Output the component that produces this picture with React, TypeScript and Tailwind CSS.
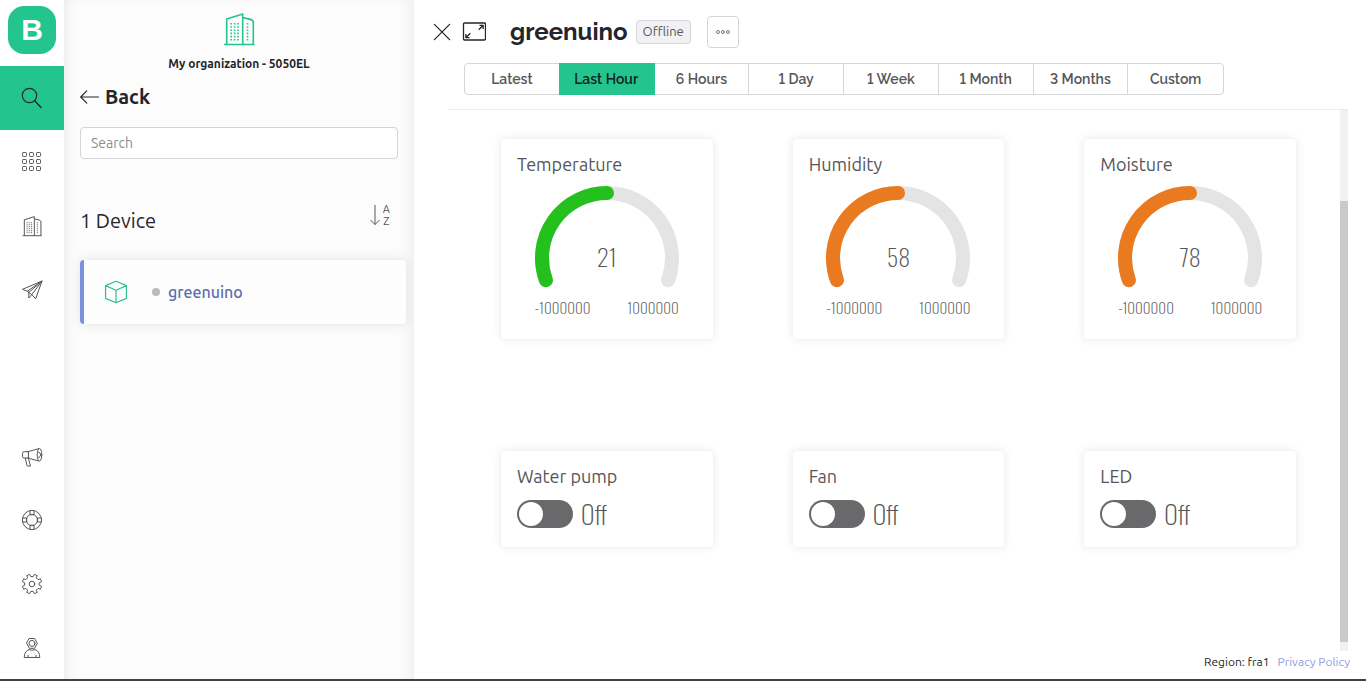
import React, { useState } from 'react';
import clsx from 'clsx';

interface Gauge {
  id: string;
  name: string;
  value: number;
  color: string;
}

interface IconProps {
  className?: string;
}

const gauges: Gauge[] = [
  { id: 'temperature', name: 'Temperature', value: 21, color: '#24c11e' },
  { id: 'humidity', name: 'Humidity', value: 58, color: '#ea7a20' },
  { id: 'moisture', name: 'Moisture', value: 78, color: '#ea7a20' },
];

const switches = [
  { id: 'pump', name: 'Water pump' },
  { id: 'fan', name: 'Fan' },
  { id: 'led', name: 'LED' },
];

const periods = ['Latest', 'Last Hour', '6 Hours', '1 Day', '1 Week', '1 Month', '3 Months', 'Custom'];

const MIN = -1000000;
const MAX = 1000000;

// Icons
const Icon: React.FC<IconProps & { children: React.ReactNode }> = ({ className, children }) => (
  <svg
    viewBox="0 0 20 20"
    className={clsx('overflow-visible', className ?? 'w-5 h-5')}
    fill="none"
    stroke="currentColor"
    strokeWidth="1"
    strokeLinejoin="round"
    strokeLinecap="round"
    aria-hidden="true"
  >
    {children}
  </svg>
);

const SearchIcon = () => (
  <Icon>
    <circle cx="7.5" cy="7.5" r="7.2" strokeWidth="1.2" />
    <path d="M12.8 12.8 19 19.5" strokeWidth="1.4" />
  </Icon>
);

const GridIcon = () => (
  <Icon>
    {[0.5, 7.5, 14.5].map(y =>
      [0.5, 7.5, 14.5].map(x => <rect key={`${x}-${y}`} x={x} y={y} width="4" height="4" rx="0.8" />)
    )}
  </Icon>
);

const BuildingIcon: React.FC<IconProps & { strokeWidth?: number }> = ({ className, strokeWidth = 1.6 }) => (
  <svg
    viewBox="0 0 32 34"
    className={className}
    fill="none"
    stroke="currentColor"
    strokeWidth={strokeWidth}
    strokeLinejoin="round"
    aria-hidden="true"
  >
    <path d="M1 32.5h30.5M3.7 32.5V7l16-5v30.5M19.7 5.5l7.6 1.9q3 .8 3 3v22.1" />
    <g strokeDasharray="1.6 1.6">
      <path d="M8.2 11v17.5M11.6 11v17.5M15 11v17.5M24.5 11v17.5" />
    </g>
  </svg>
);

const PlaneIcon = () => (
  <Icon>
    <path d="M20 1 .5 9.3l4.8 1.9L20 1l-6.3 17.8-3.9-4.2L20 1 6.8 12.4V18l3-3.4M6.8 12.4l-1.5-1.2M9.8 14.6l-3-2.2" />
  </Icon>
);

const MegaphoneIcon = () => (
  <Icon>
    <path d="M6 5.7H2.2Q.5 5.7.5 7.5v2.8q0 1.7 1.7 1.7H6zM6 5.7l10.6-3M6 12l10.6 3" />
    <ellipse cx="17.5" cy="8.8" rx="2.3" ry="6.3" />
    <path d="M16.6 6.1q2 .4 2 2.7t-2 2.7M3.3 12.3l1.6 7q.2.8 1 .8h2.6l-2.1-7.8" />
  </Icon>
);

const LifebuoyIcon = () => (
  <Icon>
    <circle cx="10" cy="10" r="9.6" />
    <circle cx="10" cy="10" r="5.6" />
    <path d="M8 .6v4.1h4V.6M8 19.4v-4.1h4v4.1M.6 8h4.1v4H.6M19.4 8h-4.1v4h4.1" />
  </Icon>
);

// Eight teeth, with a notch facing each of the four sides
const gearPath = () => {
  const points: string[] = [];
  for (let i = 0; i < 8; i++) {
    const middle = i * 45 + 22.5;
    [[-13, 7.5], [-9, 9.9], [9, 9.9], [13, 7.5]].forEach(([offset, r]) => {
      const a = ((middle + offset) * Math.PI) / 180;
      points.push(`${(10 + r * Math.cos(a)).toFixed(2)} ${(10 + r * Math.sin(a)).toFixed(2)}`);
    });
  }
  return `M${points.join('L')}Z`;
};

const GearIcon = () => (
  <Icon>
    <path d={gearPath()} />
    <circle cx="10" cy="10" r="2.8" />
  </Icon>
);

const UserIcon = () => (
  <Icon>
    <path d="M7.4.5h5.2l2.7 4.8-2.7 5H7.4l-2.7-5z" />
    <circle cx="10" cy="5.4" r="3" />
    <path d="M7 11.6q-4.6 1.2-4.8 7.9h15.6q-.2-6.7-4.8-7.9-3 1.6-6 0M6 19.2v-1.8M14 19.2v-1.8" />
  </Icon>
);

const BackIcon = () => (
  <Icon className="w-5 h-5">
    <path d="M18.5 10H.7M6.8 3.8.7 10l6.1 6.2" strokeWidth="1.1" />
  </Icon>
);

const CubeIcon = () => (
  <Icon className="w-6 h-6 text-[#2fbf8e]">
    <path d="m10 1 8.7 3.7v10.6L10 19l-8.7-3.7V4.7zM1.3 4.7 10 8.5l8.7-3.8M10 8.5V19" />
  </Icon>
);

const CloseIcon = () => (
  <Icon className="w-4 h-4">
    <path d="m.5.5 19 19M19.5.5l-19 19" strokeWidth="1.6" />
  </Icon>
);

const ExpandIcon = () => (
  <svg viewBox="0 0 24 20" className="w-6 h-5" fill="none" stroke="currentColor" strokeWidth="1.3" aria-hidden="true">
    <rect x="1.5" y="1" width="22" height="17" rx="1" />
    <path d="M17.5 3.3h3.6v3.6M20.9 3.5l-4.2 4.2M3.9 12v3.7h3.6M4.1 15.5l4.2-4.2" />
  </svg>
);

const topLinks = [
  { label: 'Search', icon: <SearchIcon />, active: true },
  { label: 'Templates', icon: <GridIcon />, active: false },
  { label: 'Organizations', icon: <BuildingIcon className="w-5 h-[22px]" />, active: false },
  { label: 'Messages', icon: <PlaneIcon />, active: false },
];

const bottomLinks = [
  { label: 'News', icon: <MegaphoneIcon /> },
  { label: 'Help', icon: <LifebuoyIcon /> },
  { label: 'Settings', icon: <GearIcon /> },
  { label: 'Profile', icon: <UserIcon /> },
];

const Sidebar: React.FC = () => (
  <nav className="w-16 shrink-0 flex flex-col bg-white text-[#55565a]">
    <a href="#home" className="h-[66px] px-2 pt-1.5">
      <span className="w-12 h-12 rounded-2xl bg-[#24c48e] text-white text-3xl font-bold font-['Liberation_Sans',sans-serif] flex items-center justify-center">
        B
      </span>
    </a>
    {topLinks.map(link => (
      <a
        key={link.label}
        href="#nav"
        aria-label={link.label}
        className={clsx('h-16 flex items-center justify-center', link.active && 'bg-[#24c48e] text-[#1b2b26]')}
      >
        {link.icon}
      </a>
    ))}
    <div className="mt-auto pb-px">
      {bottomLinks.map(link => (
        <a key={link.label} href="#nav" aria-label={link.label} className="h-16 flex items-center justify-center">
          {link.icon}
        </a>
      ))}
    </div>
  </nav>
);

const DevicePanel: React.FC = () => {
  const [query, setQuery] = useState('');

  return (
    <aside className="w-[350px] shrink-0 bg-[#fcfcfc] shadow-[inset_10px_0_12px_-8px_rgba(0,0,0,0.08),inset_-10px_0_16px_-8px_rgba(0,0,0,0.07)]">
      <div className="px-4 pt-3">
        <div className="flex flex-col items-center text-[#24c48e]">
          <BuildingIcon className="w-8 h-[34px]" strokeWidth={1.6} />
          <p className="mt-2.5 text-xs leading-4 font-bold text-[#23252a]">My organization - 5050EL</p>
        </div>
        <button type="button" className="mt-[11px] flex items-center gap-[5px] text-xl leading-7 font-bold text-[#23252a]">
          <BackIcon />
          Back
        </button>
        <input
          type="search"
          aria-label="Search"
          placeholder="Search"
          value={query}
          onChange={e => setQuery(e.target.value)}
          className="mt-4 block w-full h-8 px-2.5 text-sm bg-white border border-[#d3d4d6] rounded-sm placeholder:text-[#8c8d90]"
        />
        <div className="mt-11 flex items-start justify-between">
          <h2 className="pt-1 text-xl leading-7 text-[#23252a]">1 Device</h2>
          <button type="button" aria-label="Sort by name" className="mr-2 flex items-center gap-0.5 text-[#55565a]">
            <svg viewBox="0 0 12 22" className="w-3 h-[22px]" fill="none" stroke="currentColor" aria-hidden="true">
              <path d="M6 1v19.5M1.5 16 6 20.5l4.5-4.5" />
            </svg>
            <span className="flex flex-col text-[11px] leading-3">
              <span>A</span>
              <span>Z</span>
            </span>
          </button>
        </div>
      </div>
      <div className="pl-4 pr-2 pt-[25px]">
        <a
          href="#device"
          className="h-16 pl-5 flex items-center bg-[#fdfdfd] border-l-4 border-[#7b91de] rounded-sm shadow-[0_0_12px_rgba(0,0,0,0.10)]"
        >
          <CubeIcon />
          <span className="ml-6 w-2 h-2 rounded-full bg-[#b9babb]" />
          <span className="ml-2 text-base font-medium text-[#5b6fae]">greenuino</span>
        </a>
      </div>
    </aside>
  );
};

const GaugeCard: React.FC<{ gauge: Gauge }> = ({ gauge }) => {
  const percent = ((gauge.value - MIN) / (MAX - MIN)) * 100;
  const arc = 'M10.9 94.2A65 65 0 1 1 133.1 94.2';

  return (
    <section className="mx-10 h-[200px] px-4 pt-[15px] bg-white rounded-sm shadow-[0_0_10px_rgba(0,0,0,0.10)]">
      <h3 className="text-lg leading-5 text-[#55565a]">{gauge.name}</h3>
      <div className="w-36 mx-auto mt-3 font-['Oswald','Roboto_Condensed',sans-serif] font-extralight text-[#55565a]">
        <div className="relative">
          <svg viewBox="0 0 144 104" className="block w-36 h-26" fill="none" strokeWidth="14" strokeLinecap="round" aria-hidden="true">
            <path d={arc} stroke="#e4e4e5" />
            <path d={arc} stroke={gauge.color} pathLength="100" strokeDasharray={`${percent} 200`} />
          </svg>
          <span className="absolute inset-x-0 top-[54px] text-center text-2xl leading-8">{gauge.value}</span>
        </div>
        <div className="mt-[7px] flex justify-between text-[15px] leading-5">
          <span>{MIN}</span>
          <span>{MAX}</span>
        </div>
      </div>
    </section>
  );
};

const SwitchCard: React.FC<{ id: string; name: string }> = ({ id, name }) => {
  const [on, setOn] = useState(false);

  return (
    <section className="mx-10 h-24 px-4 pt-[15px] bg-white rounded-sm shadow-[0_0_10px_rgba(0,0,0,0.10)]">
      <h3 className="text-lg leading-5 text-[#55565a]">{name}</h3>
      <div className="mt-3.5 flex items-center gap-2">
        <input
          id={id}
          type="checkbox"
          role="switch"
          checked={on}
          onChange={() => setOn(!on)}
          className="appearance-none w-14 h-7 p-0.5 rounded-full bg-[#69696b] before:block before:w-6 before:h-6 before:rounded-full before:bg-white checked:bg-[#24c48e] checked:before:ml-7"
        />
        <label htmlFor={id} className="font-['Oswald','Roboto_Condensed',sans-serif] font-extralight text-[26px] leading-[26px] text-[#55565a]">
          {on ? 'On' : 'Off'}
        </label>
      </div>
    </section>
  );
};

const App: React.FC = () => {
  const [period, setPeriod] = useState('Last Hour');

  return (
    <div className="h-screen flex overflow-hidden bg-white font-['Ubuntu','Noto_Sans',sans-serif]">
      <Sidebar />
      <DevicePanel />

      <main className="flex-1 min-w-0 flex flex-col">
        {/* Header */}
        <header className="pl-5 pt-4 flex items-center text-[#23252a]">
          <button type="button" aria-label="Close">
            <CloseIcon />
          </button>
          <button type="button" aria-label="Full screen" className="ml-3">
            <ExpandIcon />
          </button>
          <h1 className="ml-6 text-2xl leading-8 font-bold font-['Raleway','Lato',sans-serif]">greenuino</h1>
          <span className="ml-2 h-6 px-1.5 flex items-center text-[13px] text-[#55565a] bg-[#f1f1f3] border border-[#d5d6d8] rounded-sm">
            Offline
          </span>
          <button
            type="button"
            aria-label="More actions"
            className="ml-4 w-8 h-8 flex items-center justify-center border border-[#d5d6d8] rounded-sm text-[#55565a]"
          >
            <svg viewBox="0 0 14 4" className="w-3.5 h-1" fill="none" stroke="currentColor" strokeWidth="0.8" aria-hidden="true">
              <circle cx="2" cy="2" r="1.5" />
              <circle cx="7" cy="2" r="1.5" />
              <circle cx="12" cy="2" r="1.5" />
            </svg>
          </button>
        </header>

        {/* Period picker */}
        <div className="ml-[34px] mr-[18px] pl-4 pt-[15px] pb-3.5 border-b border-[#ececed]">
          <div className="max-w-[760px] h-8 grid grid-cols-8 border border-[#d5d6d8] rounded-sm font-['Raleway','Lato',sans-serif] lining-nums">
            {periods.map(p => (
              <button
                key={p}
                type="button"
                onClick={() => setPeriod(p)}
                className={clsx(
                  'text-sm font-semibold border-r last:border-r-0',
                  p === period
                    ? '-my-px -ml-px bg-[#24c48e] border-[#24c48e] text-[#10241c]'
                    : 'border-[#d5d6d8] text-[#55565a]'
                )}
              >
                {p}
              </button>
            ))}
          </div>
        </div>

        {/* Widgets */}
        <div className="flex-1 min-h-0 ml-[34px] mr-[18px] flex">
          <div className="flex-1 pl-[13px] pr-1 overflow-hidden">
            <div className="pt-[29px] grid grid-cols-3 gap-y-28">
              {gauges.map(gauge => (
                <GaugeCard key={gauge.id} gauge={gauge} />
              ))}
              {switches.map(s => (
                <SwitchCard key={s.id} id={s.id} name={s.name} />
              ))}
            </div>
          </div>
          <div className="w-2 flex flex-col bg-[#f1f1f1]">
            <div className="flex-[91]" />
            <div className="flex-[441] bg-[#c9c9c9]" />
            <div className="flex-[9]" />
          </div>
        </div>

        <footer className="mb-2 mr-4 flex justify-end gap-2 text-xs leading-[22px] text-[#23252a]">
          <span>Region: fra1</span>
          <a href="#privacy" className="text-[#8c9de0]">
            Privacy Policy
          </a>
        </footer>
      </main>

      <div className="fixed inset-x-0 bottom-0 h-0.5 bg-[#414042]" />
    </div>
  );
};

export default App;
